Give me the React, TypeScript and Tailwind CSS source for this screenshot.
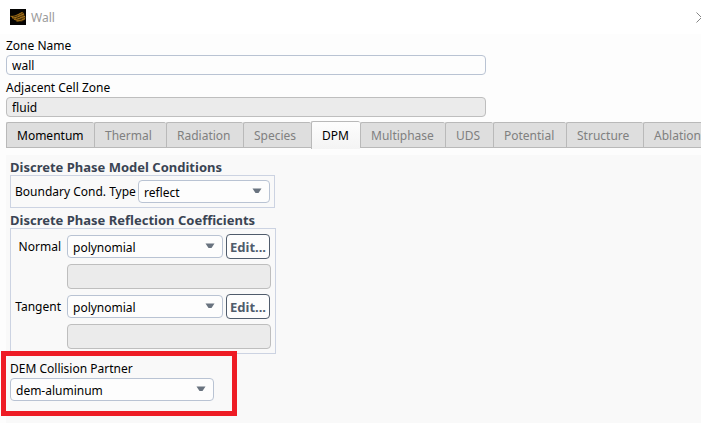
import { useState } from "react";
import type { ChangeEvent } from "react";

const tabs = [
  { name: "Momentum", width: "w-[88px]", enabled: true },
  { name: "Thermal", width: "w-[72px]", enabled: false },
  { name: "Radiation", width: "w-[77px]", enabled: false },
  { name: "Species", width: "w-[68px]", enabled: false },
  { name: "DPM", width: "w-[49px]", enabled: true },
  { name: "Multiphase", width: "w-[85px]", enabled: false },
  { name: "UDS", width: "w-[48px]", enabled: false },
  { name: "Potential", width: "w-[73px]", enabled: false },
  { name: "Structure", width: "w-[77px]", enabled: false },
  { name: "Ablation", width: "w-[70px]", enabled: false },
];

type DropdownProps = {
  id: string;
  options: string[];
  className: string;
};

function Dropdown({ id, options, className }: DropdownProps) {
  const [value, setValue] = useState(options[0]);

  const handleChange = (e: ChangeEvent<HTMLSelectElement>) => {
    setValue(e.target.value);
  };

  return (
    <div className={`relative h-[23px] shrink-0 ${className}`}>
      <select
        id={id}
        value={value}
        onChange={handleChange}
        className="block h-full w-full appearance-none rounded-[4px] border border-[#b9c3d3] bg-[#fdfdfd] pl-[5px] pr-6 pt-[2px] text-black outline-none"
      >
        {options.map((option) => (
          <option key={option}>{option}</option>
        ))}
      </select>
      <svg viewBox="0 0 10 6" className="pointer-events-none absolute right-2 top-2 h-[6px] w-[10px]">
        <path d="M0.5 0.5H9.5L6.5 5H3.5Z" fill="#69737f" />
      </svg>
    </div>
  );
}

function Coefficient({ id, label }: { id: string; label: string }) {
  return (
    <div className="grid grid-cols-[52px_1fr] gap-y-[5px]">
      <label htmlFor={id} className="pr-[6px] text-right leading-[25px]">
        {label}
      </label>
      <div className="flex items-center gap-[3px]">
        <Dropdown id={id} options={["polynomial", "constant"]} className="w-[156px]" />
        <button
          type="button"
          className="h-[25px] w-[44px] shrink-0 rounded-[4px] border border-[#4f5b6b] bg-[#fdfdfd] text-center text-[13px] font-bold text-[#505c6c]"
        >
          Edit...
        </button>
      </div>
      <input
        aria-label={`${label} coefficients`}
        disabled
        className="col-start-2 h-[25px] w-full rounded-[4px] border border-[#bebebe] bg-[#ebebeb] px-[5px]"
      />
    </div>
  );
}

function AppIcon() {
  return (
    <svg viewBox="0 0 16 16" className="h-4 w-4">
      <rect width="16" height="16" fill="#050403" />
      <path d="M0.5 7L5 7.2L8 5.2L12 3L14 4L14.5 6.5L15.5 8L15 10.5L12 12.5H7L3 10Z" fill="#5a3c0b" />
      <path
        d="M0.5 7.2C4 8 7 6 12.5 3.4M2 8.8C6 9 9 7 14 5M4 10.3C8 10.3 10 8.6 15 7.4M6.5 12C9 12 12 10.8 15 9.6"
        fill="none"
        stroke="#b9801c"
        strokeWidth="0.9"
      />
      <path d="M3 8.1L8 6.8M6 9.7L10 8.3M9 11L12 10.1" stroke="#1c1204" strokeWidth="0.5" />
    </svg>
  );
}

export default function App() {
  const [activeTab, setActiveTab] = useState("DPM");
  const [zoneName, setZoneName] = useState("wall");

  return (
    <div className="flex min-h-screen flex-col overflow-hidden bg-[#fdfdfd] font-['Noto_Sans',sans-serif] text-[12px] leading-4 text-black">
      {/* Title bar */}
      <header className="flex h-[34px] items-center bg-white pl-[10px]">
        <AppIcon />
        <h1 className="ml-[5px] flex-1 pt-[2px] text-[12px] text-[#9b9b9b]">Wall</h1>
        <button type="button" aria-label="Close" className="h-[11px] w-[5px] overflow-hidden">
          <svg viewBox="0 0 11 11" className="h-[11px] w-[11px]">
            <path d="M0.5 0.5L10.5 10.5M10.5 0.5L0.5 10.5" stroke="#858585" fill="none" />
          </svg>
        </button>
      </header>

      {/* Zone fields */}
      <div className="flex flex-col px-[6px]">
        <label htmlFor="zone-name" className="pt-[2px] leading-[19px]">
          Zone Name
        </label>
        <input
          id="zone-name"
          value={zoneName}
          onChange={(e) => setZoneName(e.target.value)}
          className="h-[20px] w-full max-w-[480px] rounded-[4px] border border-[#b9c3d3] bg-[#fdfdfd] px-[5px] outline-none"
        />
        <label htmlFor="cell-zone" className="pt-[3px] leading-[19px]">
          Adjacent Cell Zone
        </label>
        <input
          id="cell-zone"
          value="fluid"
          readOnly
          className="h-[20px] w-full max-w-[480px] rounded-[4px] border border-[#bebebe] bg-[#ebebeb] px-[5px] outline-none"
        />
      </div>

      {/* Tabs */}
      <div role="tablist" className="mt-1 flex h-[28px] items-end overflow-hidden pl-[6px]">
        {tabs.map((tab) => (
          <button
            key={tab.name}
            type="button"
            role="tab"
            aria-selected={tab.name === activeTab}
            disabled={!tab.enabled}
            onClick={() => setActiveTab(tab.name)}
            className={`shrink-0 rounded-t-[2px] border-l border-t border-[#b9b9b9] pl-[10px] text-left ${tab.width} ${
              tab.name === activeTab
                ? "h-[28px] bg-gradient-to-b from-[#fdfdfd] to-[#f4f4f4]"
                : "mb-px h-[26px] border-b bg-[#dedede] pt-[2px]"
            } ${tab.enabled ? "text-black" : "text-[#808080]"}`}
          >
            {tab.name}
          </button>
        ))}
      </div>

      {/* DPM panel */}
      <main className="ml-[6px] mt-[6px] flex flex-1 flex-col items-start bg-[#f9f9f9] pl-1 pt-[5px]">
        <h2 className="text-[13px] font-bold leading-[15px] text-[#3a4453]">Discrete Phase Model Conditions</h2>
        <div className="flex h-[33px] w-[265px] items-center border border-[#ccd3e2] pl-1">
          <label htmlFor="bc-type" className="w-[123px] shrink-0 whitespace-nowrap">
            Boundary Cond. Type
          </label>
          <Dropdown id="bc-type" options={["reflect", "trap", "escape"]} className="w-[132px]" />
        </div>

        <h2 className="mt-[5px] text-[13px] font-bold leading-[15px] text-[#3a4453]">
          Discrete Phase Reflection Coefficients
        </h2>
        <div className="flex w-[266px] flex-col gap-[5px] border border-[#ccd3e2] pb-1 pl-1 pr-1 pt-[5px]">
          <Coefficient id="normal" label="Normal" />
          <Coefficient id="tangent" label="Tangent" />
        </div>

        <div className="relative mt-[6px] flex w-[204px] flex-col">
          <label htmlFor="dem-partner" className="leading-[18px]">
            DEM Collision Partner
          </label>
          <Dropdown id="dem-partner" options={["dem-aluminum", "none"]} className="w-full" />
          {/* Highlight frame */}
          <div className="pointer-events-none absolute -left-[9px] -top-[9px] h-[65px] w-[236px] border-5 border-[#ee1c25]" />
        </div>
      </main>
    </div>
  );
}
